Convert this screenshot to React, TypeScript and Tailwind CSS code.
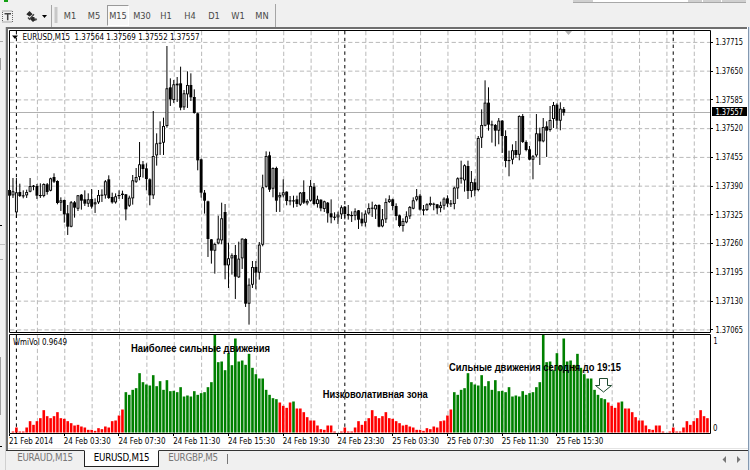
import clsx from "clsx";

const PITCH = 3.421;
const ORIGIN = 16.4;
const DAY = 96;

// One block per stretch of bars: [high, body top, body bottom, low, rising],
// in thirds of a pixel below the block's base line.
type Candle = [number, number, number, number, 0 | 1];

const blocks: { base: number; candles: Candle[] }[] = [
  {
    base: 150,
    candles: [
      [114, 120, 137, 140, 0], [84, 124, 136, 143, 1], [84, 127, 187, 203, 1],
      [101, 126, 138, 140, 0], [121, 136, 139, 144, 0], [119, 126, 136, 143, 1],
      [84, 108, 125, 126, 1], [105, 107, 109, 120, 0], [102, 108, 137, 146, 0],
      [100, 135, 137, 143, 0], [100, 102, 138, 141, 1], [99, 103, 126, 133, 0],
      [83, 85, 122, 123, 1], [70, 81, 95, 98, 0], [91, 93, 159, 162, 0],
      [142, 151, 158, 182, 1], [149, 150, 193, 217, 0], [165, 190, 230, 254, 0],
      [153, 157, 230, 231, 1], [153, 157, 173, 202, 0], [135, 136, 176, 182, 1],
      [132, 134, 152, 178, 0], [121, 148, 161, 167, 0], [130, 148, 161, 170, 1],
      [117, 147, 170, 175, 0], [145, 157, 163, 188, 1], [120, 135, 157, 161, 1],
      [118, 134, 137, 155, 0], [90, 94, 136, 145, 1], [76, 88, 144, 146, 0],
      [128, 141, 157, 160, 0], [130, 139, 157, 160, 1], [121, 135, 137, 146, 0],
      [122, 131, 135, 146, 0], [132, 133, 178, 210, 0],
    ],
  },
  {
    base: 40,
    candles: [
      [467, 473, 497, 500, 1], [405, 421, 475, 493, 1], [384, 411, 425, 428, 1],
      [306, 373, 411, 420, 1], [363, 373, 387, 412, 0], [370, 385, 417, 450, 0],
      [415, 418, 466, 495, 0], [213, 348, 466, 476, 1], [280, 310, 346, 376, 1],
      [244, 308, 311, 344, 0], [233, 258, 308, 344, 1], [18, 145, 258, 262, 1],
      [115, 142, 178, 197, 0], [120, 133, 180, 188, 1], [111, 131, 136, 185, 0],
      [80, 130, 203, 210, 0], [150, 160, 202, 209, 1], [94, 135, 163, 203, 1],
      [100, 135, 172, 182, 0], [148, 171, 219, 220, 0], [218, 220, 361, 390, 0],
    ],
  },
  {
    base: 140,
    candles: [
      [56, 58, 158, 172, 0], [150, 158, 182, 220, 0], [182, 184, 297, 350, 0],
      [297, 298, 332, 370, 0], [308, 312, 332, 400, 1], [227, 296, 310, 312, 1],
      [188, 235, 301, 312, 1], [192, 216, 376, 417, 0], [308, 355, 376, 443, 1],
      [340, 346, 355, 403, 1], [315, 345, 410, 476, 0], [305, 356, 412, 413, 1],
      [295, 296, 355, 386, 1], [295, 297, 491, 500, 0], [415, 434, 491, 553, 1],
      [363, 381, 434, 443, 1], [363, 381, 398, 447, 0], [306, 314, 398, 418, 1],
      [104, 142, 314, 318, 1], [34, 48, 140, 142, 1], [35, 46, 149, 155, 0],
      [82, 84, 146, 171, 1], [80, 84, 182, 215, 0], [157, 165, 172, 215, 1],
      [118, 157, 166, 171, 1],
    ],
  },
  {
    base: 150,
    candles: [
      [124, 125, 153, 165, 0], [138, 151, 154, 165, 0], [137, 151, 154, 172, 0],
      [137, 148, 162, 170, 0], [126, 128, 164, 167, 1], [91, 126, 158, 161, 0],
      [148, 153, 160, 165, 1], [90, 108, 152, 154, 1], [99, 110, 162, 165, 0],
      [137, 148, 162, 172, 1], [148, 149, 175, 183, 0], [152, 154, 177, 185, 1],
      [156, 158, 190, 217, 0], [148, 190, 202, 219, 0], [187, 200, 203, 210, 0],
      [185, 194, 202, 221, 1], [166, 172, 193, 206, 1], [168, 170, 192, 207, 0],
      [165, 192, 197, 208, 0], [184, 195, 198, 215, 0], [175, 184, 197, 210, 1],
      [180, 181, 209, 236, 0], [187, 206, 220, 228, 0], [181, 191, 218, 229, 1],
      [160, 174, 190, 193, 1], [155, 173, 176, 200, 0], [163, 165, 178, 206, 1],
      [163, 165, 230, 231, 0], [177, 208, 229, 231, 1], [145, 156, 208, 218, 1],
      [136, 148, 156, 158, 1], [146, 148, 168, 180, 0], [160, 168, 198, 210, 0],
      [194, 196, 228, 231, 0], [205, 213, 228, 244, 1], [184, 199, 217, 219, 1],
      [168, 171, 199, 206, 1], [142, 151, 176, 177, 1], [117, 139, 149, 153, 1],
      [132, 137, 179, 181, 0], [165, 178, 182, 195, 0], [160, 163, 180, 182, 1],
      [140, 159, 165, 168, 1], [158, 161, 164, 180, 0], [162, 163, 175, 192, 0],
      [155, 166, 174, 186, 1], [142, 146, 167, 178, 1], [136, 145, 161, 170, 0],
    ],
  },
  {
    base: 70,
    candles: [
      [390, 400, 403, 410, 0], [350, 353, 402, 417, 1], [322, 325, 355, 386, 1],
      [272, 323, 326, 340, 0], [283, 286, 331, 364, 1], [272, 288, 363, 386, 0],
      [303, 336, 363, 381, 1], [326, 337, 361, 378, 0], [198, 204, 360, 363, 1],
      [118, 165, 203, 233, 1], [31, 98, 167, 168, 1], [52, 98, 164, 181, 0],
      [152, 163, 166, 217, 0], [162, 165, 182, 228, 0], [144, 152, 182, 222, 1],
      [150, 152, 198, 248, 0], [181, 198, 273, 291, 0], [242, 270, 273, 318, 0],
      [223, 241, 269, 282, 1], [213, 240, 255, 262, 0], [136, 138, 254, 270, 1],
      [132, 138, 216, 218, 0], [211, 216, 240, 243, 0], [228, 238, 269, 270, 0],
      [255, 259, 269, 327, 1], [132, 190, 256, 260, 1], [173, 190, 214, 284, 0],
      [144, 171, 214, 216, 1], [154, 169, 182, 260, 0], [108, 150, 180, 184, 1],
      [96, 105, 147, 173, 1], [100, 104, 152, 175, 0], [97, 116, 152, 180, 1],
      [111, 117, 128, 136, 0],
    ],
  },
];

const candles = blocks.flatMap(({ base, candles: list }) =>
  list.map(([high, top, bottom, low, up]) => ({
    high: base + high / 3,
    top: base + top / 3,
    bottom: base + bottom / 3,
    low: base + low / 3,
    up: up === 1,
  })),
);

// WmiVol profile of one day, thirds of a pixel, repeated every 96 bars
const volume = [
  15, 3, 3, 15, 34, 23, 34, 43, 67, 49, 43, 49, 61, 43, 41, 34, 28, 21, 23, 18,
  15, 8, 8, 5, 13, 10, 18, 15, 34, 36, 51, 69, 121, 113, 128, 133, 178, 151,
  144, 141, 172, 139, 154, 128, 157, 124, 125, 121, 136, 108, 111, 108, 124,
  113, 118, 121, 136, 151, 293, 211, 213, 187, 238, 202, 282, 213, 216, 203,
  236, 194, 175, 162, 162, 128, 113, 103, 100, 90, 80, 74, 90, 93, 72, 72, 61,
  46, 36, 36, 21, 10, 8, 21, 21, 3, 0, 3,
];

const isStrong = (slot: number) => (slot >= 32 && slot <= 76) || slot === 81;

const volumeBars = Array.from({ length: 204 }, (_, n) => {
  const index = n - 1;
  const slot = (index + DAY) % DAY;
  return { index, height: volume[slot] / 3, strong: isStrong(slot) };
});

const gridX = Array.from({ length: 25 }, (_, n) => 37.4 + n * 27.37);
const gridY = Array.from({ length: 11 }, (_, n) => 42.4 + n * 28.75);
const prices = [
  "1.37715", "1.37650", "1.37585", "1.37520", "1.37455", "1.37390",
  "1.37325", "1.37260", "1.37195", "1.37130", "1.37065",
];
const times = [
  "21 Feb 2014", "24 Feb 03:30", "24 Feb 07:30", "24 Feb 11:30",
  "24 Feb 15:30", "24 Feb 19:30", "24 Feb 23:30", "25 Feb 03:30",
  "25 Feb 07:30", "25 Feb 11:30", "25 Feb 15:30",
];
const periods = ["M1", "M5", "M15", "M30", "H1", "H4", "D1", "W1", "MN"];

function Label({
  x,
  y,
  width,
  children,
  className,
}: {
  x: number;
  y: number;
  width: number;
  children: string;
  className?: string;
}) {
  return (
    <text
      className={clsx("whitespace-pre", className ?? "fill-black text-[8.6px]")}
      lengthAdjust="spacingAndGlyphs"
      textLength={width}
      x={x}
      y={y}
    >
      {children}
    </text>
  );
}

function Toolbar() {
  return (
    <div className="h-[27px] bg-[#f0f0f0]">
      <div className="flex h-1 justify-between">
        <div className="ml-1 h-[2px] w-1 bg-[#12a012]" />
        <div className="mr-1 flex h-[3px] w-[173px] border-[#a8a8a8] border-b bg-[#d0d0d0]">
          <div className="ml-5 w-[95px] bg-white" />
          <div className="ml-[14px] w-px bg-white" />
          <div className="ml-[18px] w-px bg-white" />
        </div>
      </div>
      <div className="flex h-[23px] items-center">
        <svg className="h-[23px] w-[59px] shrink-0" viewBox="0 0 59 23">
          <rect className="fill-none stroke-[#666]" height="11" strokeDasharray="1 1" width="10" x="2.5" y="7" />
          <path className="fill-none stroke-[#444] stroke-[1.5]" d="M4.500 9.700h6.500M7.700 9.700v6.500" />
          <path className="fill-[#2b2b2b]" d="m29.500 7 3.200 3.200-3.200 2.300-3.200-2.300zM31.500 13h3v1.500h2.500l-4 3.500-3-3z" />
          <path className="fill-none stroke-[#444] stroke-[1.300]" d="m28 13.500 1.500 1.700 4.500-5M34 16.500l3-1" />
          <path className="fill-black" d="M42 11h5l-2.500 3z" />
          <path className="stroke-[#a5a5a5]" d="M51.500 1v22" />
          <path className="stroke-[#a0a0a0] stroke-[3]" d="M56 3.500v16" strokeDasharray="1 1" />
        </svg>
        {periods.map((name) => (
          <div
            className={clsx(
              "mr-[2px] flex h-[21px] w-[22px] shrink-0 items-center justify-center border text-[#484848] text-[9.2px]",
              name === "M15"
                ? "border-t-[#999] border-r-white border-b-white border-l-[#999] bg-[#f8f8f8]"
                : "border-transparent",
            )}
            key={name}
          >
            {name}
          </div>
        ))}
        <div className="h-full w-px bg-[#a5a5a5]" />
      </div>
    </div>
  );
}

function Chart() {
  return (
    <svg className="block h-[423px] w-[742px]" viewBox="6 27 742 423">
      <rect className="fill-white" height="423" width="742" x="6" y="27" />
      <path className="fill-none stroke-[#6e6e6e] stroke-2" d="M747 28H7v422" />

      <g className="stroke-[#b9b9b9]" strokeDasharray="4.3 2.6">
        {gridX.map((x) => (
          <path d={`M${x} 31V332M${x} 335V433`} key={x} />
        ))}
        {gridY.map((y) => (
          <path d={`M10 ${y}H711`} key={y} />
        ))}
      </g>
      <g className="stroke-black" strokeDasharray="3.4 3.4">
        {[0, 1, 2].map((day) => {
          const x = ORIGIN + day * DAY * PITCH;
          return <path d={`M${x} 31V332M${x} 335V433`} key={day} />;
        })}
      </g>
      <path className="stroke-[#b0b0b0]" d="M10 112.5H711" />

      {candles.map(({ high, top, bottom, low, up }, n) => {
        const x = ORIGIN + (n - 2) * PITCH;
        const height = Math.max(bottom - top, 1.1);
        return (
          <g key={x}>
            <path className="stroke-black" d={`M${x} ${high}V${low + 0.3}`} />
            <rect className="fill-black" height={height} width="2.9" x={x - 1.45} y={top} />
            {up && height > 1.8 && (
              <rect className="fill-white" height={height - 1.7} width="0.95" x={x - 0.475} y={top + 0.85} />
            )}
          </g>
        );
      })}
      <path className="fill-[#b5b5b5]" d="M565 31h7l-3.5 4z" />

      {volumeBars.map(({ index, height, strong }) => (
        <rect
          className={strong ? "fill-[#008000]" : "fill-[#ff0000]"}
          height={height}
          key={index}
          width="2.6"
          x={ORIGIN + index * PITCH - 1.3}
          y={432.5 - height}
        />
      ))}

      <path className="fill-none stroke-black" d="M9.5 332.5V30.5H710.5V332.5ZM9.5 433.5V334.5H710.5V433.5Z" />
      {gridY.map((y, n) => (
        <g key={y}>
          <path className="stroke-black" d={`M711 ${Math.floor(y) + 0.5}h2`} />
          <Label width={27.5} x={715.5} y={y + 2.8}>{prices[n]}</Label>
        </g>
      ))}
      <rect className="fill-black" height="9" width="35" x="712" y="107" />
      <Label className="fill-white text-[8.6px]" width={27.5} x={715.5} y={114.8}>1.37557</Label>
      <Label width={4} x={713.5} y={344}>1</Label>
      <Label width={4.5} x={713} y={431}>0</Label>

      {times.map((time, n) => (
        <g key={time}>
          <path className="stroke-black" d={`M${Math.round(9 + n * 54.74) + 0.5} 434v2`} />
          <Label width={n === 0 ? 44 : 47} x={9 + n * 54.74} y={444.2}>{time}</Label>
        </g>
      ))}

      <path className="fill-black" d="M12 35.5h6l-3 3.4z" />
      <Label width={177} x={22.5} y={40}>EURUSD,M15  1.37564 1.37569 1.37552 1.37557</Label>
      <Label width={54} x={13} y={345}>WmiVol 0.9649</Label>

      <g className="font-bold font-['Liberation_Sans',Arial,sans-serif]">
        <Label className="fill-black text-[10.5px]" width={139} x={131} y={352}>Наиболее сильные движения</Label>
        <Label className="fill-black text-[10.5px]" width={105} x={322.7} y={398}>Низковолативная зона</Label>
        <Label className="fill-black text-[10.5px]" width={172} x={449} y={371}>Сильные движения сегодня до 19:15</Label>
      </g>
      <path className="fill-white stroke-[#1f4a30]" d="M599.5 378.5h8v7h4l-8 6.5-8-6.5h4z" />
      <path className="stroke-[#e4e4e4]" d="M8 448.5H748" />
    </svg>
  );
}

function Tabs() {
  return (
    <div className="flex h-[20px] items-start border-[#333] border-t bg-[#f0f0f0] text-[#777] text-[9.7px] tracking-[-0.24px]">
      <div className="flex h-[15px] w-[78px] items-center justify-center">EURAUD,M15</div>
      <div className="-mt-px flex h-[17px] w-[75px] items-center justify-center border border-[#222] border-t-white bg-white text-black">
        EURUSD,M15
      </div>
      <div className="flex h-[15px] w-[68px] items-center justify-center">EURGBP,M5</div>
      <div className="mt-[3px] h-[10px] w-px bg-[#777]" />
      <svg className="mt-1 mr-[6px] ml-auto h-[9px] w-[20px]" viewBox="0 0 20 9">
        <path className="fill-[#777]" d="M4 1v7L.5 4.500zM15 1v7l3.500-3.500z" />
      </svg>
    </div>
  );
}

function SidePanel() {
  return (
    <div className="flex w-[6px] shrink-0 flex-col border-[#d0d0d0] border-r">
      <div className="mt-[14px] h-px w-[3px] bg-[#a8a8a8]" />
      <div className="mt-[16px] h-[12px] w-px bg-[#a0a0a0]" />
      <div className="mt-[155px] h-px w-[2px] bg-black" />
      <div className="mt-[18px] h-px bg-[#c0c0c0]" />
      <div className="mt-[14px] h-px w-[3px] bg-[#a8a8a8]" />
      <div className="mt-[97px] h-[58px] w-px bg-[#a0a0a0]" />
      <div className="mt-[31px] h-px w-[2px] bg-black" />
    </div>
  );
}

export default function App() {
  return (
    <div className="h-[470px] w-[750px] overflow-hidden bg-[#f0f0f0] font-['DejaVu_Sans_Condensed','DejaVu_Sans',sans-serif] font-stretch-condensed">
      <Toolbar />
      <div className="flex">
        <SidePanel />
        <div className="w-[742px] shrink-0">
          <Chart />
          <Tabs />
        </div>
        <div className="w-[2px] border-[#8398b0] border-l bg-[#d8e3f0]" />
      </div>
    </div>
  );
}
